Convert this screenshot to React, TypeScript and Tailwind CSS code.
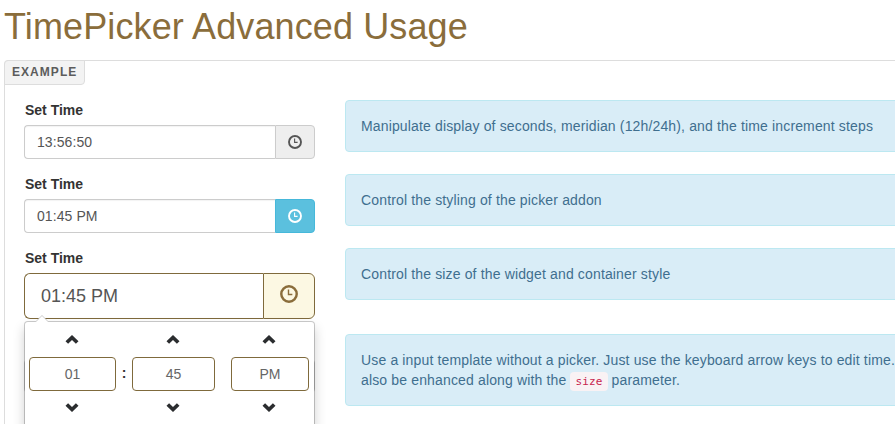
import type { ReactNode } from 'react'
import clsx from 'clsx'

function ClockIcon({ size = 14, className }: { size?: number; className?: string }) {
  return (
    <svg width={size} height={size} viewBox="0 0 14 14" fill="none" stroke="currentColor" className={className}>
      <circle cx="7" cy="7" r="6" strokeWidth="1.9" />
      <path d="M6.6 3.5V7.4H9.6" strokeWidth="1.1" />
    </svg>
  )
}

function ChevronIcon({ down }: { down?: boolean }) {
  return (
    <svg width="14" height="9" viewBox="0 0 14 9" fill="#2b2d2f" className={clsx('relative -left-px mx-auto block', down && 'rotate-180')}>
      <path d="M7 0L13.5 6.2L10.9 8.8L7 5L3.1 8.8L0.5 6.2Z" />
    </svg>
  )
}

function Label() {
  return <label className="mb-[5px] block pl-px font-bold text-[#333]">Set Time</label>
}

function TimeField({ value, addon }: { value: string; addon: string }) {
  return (
    <div className="mb-[15px]">
      <Label />
      <div className="flex h-[34px]">
        <div className="flex-1 rounded-l border border-r-0 border-[#ccc] px-3 py-[6px] tracking-[0.08px] text-[#555] shadow-[inset_0_1px_1px_rgba(0,0,0,0.05)]">
          {value}
        </div>
        <div className={clsx('flex w-10 items-center justify-center rounded-r border', addon)}>
          <ClockIcon />
        </div>
      </div>
    </div>
  )
}

function Spinner({ value, width }: { value: string; width: string }) {
  return (
    <div className={width}>
      <ChevronIcon />
      <div className="mt-[13px] mb-[12px] h-[34px] rounded border border-[#7f6a3c] py-[6px] text-center text-[#666]">{value}</div>
      <ChevronIcon down />
    </div>
  )
}

function TimeWidget() {
  return (
    <div className="absolute top-[48px] left-0 z-10 h-[130px] w-[291px] rounded border border-black/20 bg-white bg-clip-padding px-1 pt-[13px] shadow-[0_6px_12px_rgba(0,0,0,0.18)]">
      <svg width="14" height="7" viewBox="0 0 14 7" className="absolute -top-[7px] left-[10px]">
        <path d="M0 7L7 0L14 7Z" fill="#ccc" />
        <path d="M1 7L7 1L13 7Z" fill="#fff" />
      </svg>
      <div className="flex">
        <Spinner value="01" width="w-[87px]" />
        <div className="w-4 pt-[28px] text-center font-bold text-[#333]">:</div>
        <Spinner value="45" width="w-[83px]" />
        <div className="w-4" />
        <Spinner value="PM" width="w-[78px]" />
      </div>
    </div>
  )
}

function Info({ children, className }: { children: ReactNode; className?: string }) {
  return (
    <div className={clsx('w-[640px] rounded border border-[#bce8f1] bg-[#d9edf7] p-[15px] tracking-[0.148px] whitespace-nowrap text-[#3f6f8f]', className)}>
      {children}
    </div>
  )
}

export default function App() {
  return (
    <div className="h-[424px] w-[895px] overflow-hidden bg-white pl-1 font-['Liberation_Sans',Arial,sans-serif] text-sm leading-5">
      <h1 className="pt-[7px] text-[36px] leading-10 tracking-[0.12px] text-[#8a6d3b]">TimePicker Advanced Usage</h1>
      <div className="mt-[13px] h-[400px] w-[940px] rounded border border-[#ddd]">
        <div className="-mt-px -ml-px h-[25px] w-[81px] rounded-tl rounded-br border border-[#ddd] bg-[#f3f3f3] pl-[7px] text-xs leading-[23px] font-bold tracking-[1.05px] text-[#5c5c5c]">
          EXAMPLE
        </div>
        <div className="mt-[15px] flex gap-[30px] pl-[19px]">
          <div className="w-[291px] shrink-0">
            <TimeField value="13:56:50" addon="border-[#ccc] bg-[#eee] text-[#555]" />
            <TimeField value="01:45 PM" addon="border-[#46b8da] bg-[#5bc0de] text-white" />
            <Label />
            <div className="relative mb-[15px] flex h-[46px]">
              <div className="flex-1 rounded-l-md border border-r-0 border-[#7f6a3c] px-4 py-[9px] text-lg leading-[26px] text-[#555]">
                01:45 PM
              </div>
              <div className="flex w-[52px] items-center justify-center rounded-r-md border border-[#7f6a3c] bg-[#fcf8e3] pb-1 text-[#8a6d3b]">
                <ClockIcon size={18} />
              </div>
              <TimeWidget />
            </div>
            <Label />
            <div className="h-[34px] rounded border border-[#ccc]" />
          </div>
          <div className="shrink-0">
            <Info className="mb-[22px]">Manipulate display of seconds, meridian (12h/24h), and the time increment steps</Info>
            <Info className="mb-[22px]">Control the styling of the picker addon</Info>
            <Info className="mb-[34px]">Control the size of the widget and container style</Info>
            <Info className="h-[72px]">
              Use a input template without a picker. Just use the keyboard arrow keys to edit time.
              <br />
              also be enhanced along with the{' '}
              <code className="rounded bg-[#f9f2f4] px-[5px] py-[3px] font-['DejaVu_Sans_Mono',monospace] text-[11px] leading-none text-[#c7254e]">size</code>{' '}
              parameter.
            </Info>
          </div>
        </div>
      </div>
    </div>
  )
}
